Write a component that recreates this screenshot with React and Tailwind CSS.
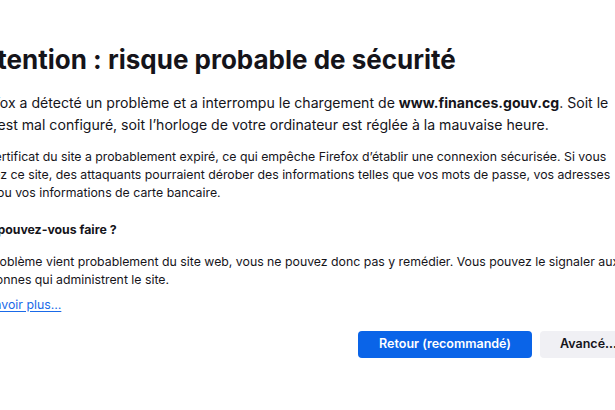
import React from "react";

const Line = ({ children }) => <div className="whitespace-nowrap">{children}</div>;

export default function App() {
  return (
    <div
      className="h-screen w-full overflow-hidden bg-white text-[#15141a]"
      style={{ fontFamily: "Inter, 'Noto Sans', sans-serif" }}
    >
      <div className="-ml-[30px] w-[667px] pt-[45px]">
        {/* Title */}
        <h1 className="whitespace-nowrap text-[26px] font-bold leading-[30px]">
          Attention : risque probable de sécurité
        </h1>

        {/* Intro */}
        <div className="mt-[17px] text-[14.1px] leading-[22px]">
          <Line>
            Firefox a détecté un problème et a interrompu le chargement de{" "}
            <strong className="font-bold">www.finances.gouv.cg</strong>. Soit le
          </Line>
          <Line>site est mal configuré, soit l’horloge de votre ordinateur est réglée à la mauvaise heure.</Line>
        </div>

        {/* Details */}
        <div className="mt-[12px] text-[12.3px] leading-[18px]">
          <Line>
            Le certificat du site a probablement expiré, ce qui empêche Firefox d’établir une connexion sécurisée. Si vous
          </Line>
          <Line>
            visitez ce site, des attaquants pourraient dérober des informations telles que vos mots de passe, vos adresses
          </Line>
          <Line>mail ou vos informations de carte bancaire.</Line>
        </div>

        {/* What can you do */}
        <h2 className="mt-[19px] whitespace-nowrap text-[12.3px] font-bold leading-[18px]">
          Que pouvez-vous faire ?
        </h2>
        <div className="mt-[14px] text-[12.3px] leading-[18px]">
          <Line>
            Le problème vient probablement du site web, vous ne pouvez donc pas y remédier. Vous pouvez le signaler aux
          </Line>
          <Line>personnes qui administrent le site.</Line>
        </div>

        <div className="mt-[7px] text-[12.3px] leading-[18px]">
          <a href="#" className="text-[#1a6ae8] underline underline-offset-2">
            En savoir plus…
          </a>
        </div>

        {/* Buttons */}
        <div className="mt-[17px] flex justify-end gap-2">
          <button className="h-[27px] w-[174px] rounded bg-[#0a64e8] text-[12.5px] font-semibold text-white">
            Retour (recommandé)
          </button>
          <button className="h-[27px] rounded bg-[#f0f0f4] px-5 text-[12.5px] font-semibold text-[#15141a]">
            Avancé…
          </button>
        </div>
      </div>
    </div>
  );
}
